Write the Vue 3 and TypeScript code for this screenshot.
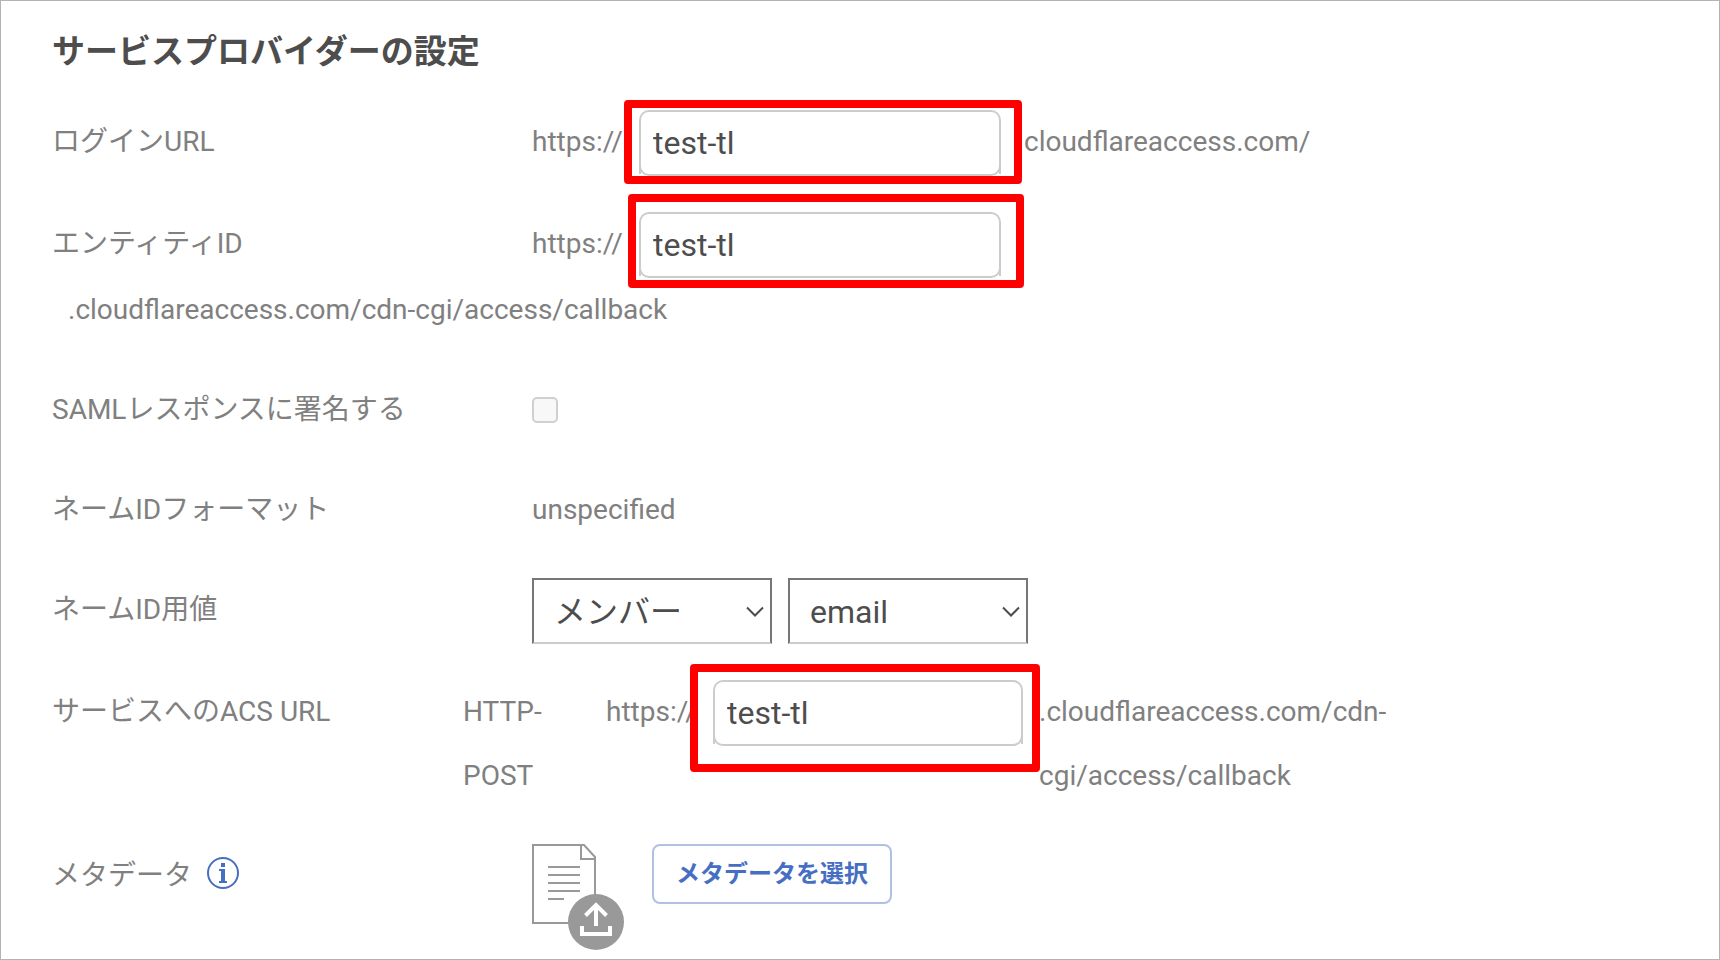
<script setup lang="ts">
import { ref } from 'vue'

const loginHost = ref('test-tl')
const entityHost = ref('test-tl')
const acsHost = ref('test-tl')
const signResponse = ref(false)
const nameSource = ref('member')
const nameField = ref('email')
</script>

<template>
  <main class="page">
    <form class="form" @submit.prevent>
      <h1 class="title">サービスプロバイダーの設定</h1>

      <div class="row">
        <label class="label" for="login-url">ログインURL</label>
        <span class="prefix">https://</span>
        <span class="field marked marked-login">
          <input id="login-url" v-model="loginHost" class="input" type="text" />
        </span>
        <span class="suffix suffix-login">cloudflareaccess.com/</span>
      </div>

      <div class="row">
        <label class="label" for="entity-id">エンティティID</label>
        <span class="prefix">https://</span>
        <span class="field marked marked-entity">
          <input id="entity-id" v-model="entityHost" class="input" type="text" />
        </span>
        <span class="suffix">.cloudflareaccess.com/cdn-cgi/access/callback</span>
      </div>

      <div class="row">
        <label class="label" for="sign-response">SAMLレスポンスに署名する</label>
        <span class="check-wrap">
          <input id="sign-response" v-model="signResponse" class="check" type="checkbox" />
        </span>
      </div>

      <div class="row">
        <span class="label">ネームIDフォーマット</span>
        <span>unspecified</span>
      </div>

      <div class="row">
        <label id="name-label" class="label" for="name-source">ネームID用値</label>
        <div class="selects">
          <span class="select-wrap">
            <select id="name-source" v-model="nameSource" class="select">
              <option value="member">メンバー</option>
            </select>
            <svg class="chevron" width="18" height="12" viewBox="0 0 18 12" aria-hidden="true">
              <path d="M1 1.5 9 9.500 17 1.500" />
            </svg>
          </span>
          <span class="select-wrap">
            <select v-model="nameField" class="select" aria-labelledby="name-label">
              <option value="email">email</option>
            </select>
            <svg class="chevron" width="18" height="12" viewBox="0 0 18 12" aria-hidden="true">
              <path d="M1 1.5 9 9.500 17 1.500" />
            </svg>
          </span>
        </div>
      </div>

      <div class="row row-acs">
        <label class="label label-acs" for="acs-url">サービスへのACS URL</label>
        <span class="binding">HTTP-POST</span>
        <span class="prefix">https://</span>
        <span class="field field-acs marked marked-acs">
          <input id="acs-url" v-model="acsHost" class="input" type="text" />
        </span>
        <span class="suffix suffix-acs">.cloudflareaccess.com/cdn-cgi/access/callback</span>
      </div>

      <div class="row">
        <span class="label label-meta">
          メタデータ
          <button class="info" type="button" aria-label="メタデータ">
            <svg width="32" height="32" viewBox="0 0 32 32" aria-hidden="true">
              <circle cx="16" cy="16" r="15" fill="none" stroke="#466fc4" stroke-width="2" />
              <path d="M14 6h4v4h-4zM12 12h6v12h2v2h-8v-2h2V14h-2z" fill="#466fc4" />
            </svg>
          </button>
        </span>
        <svg class="file" width="92" height="106" viewBox="0 0 92 106" aria-hidden="true">
          <g fill="none" stroke="#999" stroke-width="2">
            <path d="M1 1h51l11 12v66H1z" />
            <path d="M49 1v14h14" />
            <path d="M16 23h32M16 31h32M16 39h32M16 47h32M16 55h16" />
          </g>
          <circle cx="64" cy="78" r="28" fill="#999" />
          <g fill="none" stroke="#fff" stroke-width="4">
            <path d="M64 82V61" />
            <path d="m53.500 71.500 10.500-10.500 10.500 10.500" />
            <path d="M50 82v8h28v-8" />
          </g>
        </svg>
        <button class="choose" type="button">メタデータを選択</button>
      </div>
    </form>
  </main>
</template>

<style>
body {
  margin: 0;
  background: #fff;
}
</style>

<style scoped>
.page {
  box-sizing: border-box;
  min-height: 100vh;
  padding: 28px 51px 8px;
  border: 1px solid #b3b3b3;
  color: #808080;
  font-family: Roboto, "Noto Sans CJK JP", sans-serif;
  font-size: 28px;
  line-height: 64px;
}

.form {
  display: flex;
  flex-direction: column;
  gap: 36px;
  max-width: 1368px;
}

.title {
  margin: 0;
  color: #4d4d4d;
  font-size: 33px;
  font-weight: 700;
  line-height: 45px;
}

.row {
  display: flex;
  flex-wrap: wrap;
  align-items: flex-start;
}

.row-acs {
  flex-wrap: nowrap;
}

.label {
  flex: none;
  width: 480px;
}

.label-acs {
  width: 411px;
}

.label-meta {
  display: flex;
  align-items: flex-start;
  gap: 15px;
}

.prefix {
  flex: none;
  width: 107px;
}

.binding {
  flex: none;
  box-sizing: border-box;
  width: 143px;
  padding-right: 48px;
}

.field {
  position: relative;
  flex: none;
  width: 362px;
  height: 66px;
}

.field-acs {
  width: 310px;
}

.input {
  box-sizing: border-box;
  display: block;
  width: 100%;
  height: 100%;
  padding: 0 12px;
  border: 2px solid #ccc;
  border-radius: 10px;
  background: #fff;
  color: #4d4d4d;
  font: inherit;
  font-size: 32px;
  line-height: 40px;
}

/* Side rules that run straight past the rounded lower corners */
.field::before {
  content: "";
  position: absolute;
  right: 0;
  bottom: 2px;
  left: 0;
  height: 10px;
  border: solid #ccc;
  border-width: 0 2px;
  pointer-events: none;
}

.marked::after {
  content: "";
  position: absolute;
  border: 8px solid #f00;
  border-radius: 4px;
  pointer-events: none;
}

.marked-login::after {
  inset: -10px -21px -8px -15px;
}

.marked-entity::after {
  inset: -18px -23px -10px -11px;
}

.marked-acs::after {
  inset: -16px -17px -26px -23px;
}

.suffix {
  margin-left: 16px;
}

.suffix-login {
  margin-left: 23px;
}

.suffix-acs {
  flex: 1;
  min-width: 0;
}

.check-wrap {
  display: flex;
  align-items: center;
  height: 64px;
}

.check {
  appearance: none;
  box-sizing: border-box;
  width: 26px;
  height: 26px;
  margin: 0;
  border: 2px solid #d0d0d0;
  border-radius: 5px;
  background: #f8f8f8;
}

.selects {
  display: flex;
  gap: 16px;
}

.select-wrap {
  position: relative;
  width: 240px;
  height: 66px;
}

.select {
  appearance: none;
  box-sizing: border-box;
  display: block;
  width: 100%;
  height: 100%;
  padding: 0 40px 2px 20px;
  border: 2px solid #767676;
  border-bottom-color: #ccc;
  border-radius: 0;
  background: #fff;
  color: #4d4d4d;
  font: inherit;
  font-size: 32px;
}

.chevron {
  position: absolute;
  top: 28px;
  right: 8px;
  fill: none;
  stroke: #4d4d4d;
  stroke-width: 2;
  pointer-events: none;
}

.info {
  display: block;
  width: 32px;
  height: 32px;
  margin-top: 13px;
  padding: 0;
  border: 0;
  background: none;
}

.info svg {
  display: block;
}

.file {
  display: block;
  margin-right: 28px;
}

.choose {
  box-sizing: border-box;
  width: 240px;
  height: 60px;
  padding: 0;
  border: 2px solid #b0c1e2;
  border-radius: 8px;
  background: #fff;
  color: #466fc4;
  font: inherit;
  font-size: 24px;
  font-weight: 700;
  line-height: 56px;
}
</style>
